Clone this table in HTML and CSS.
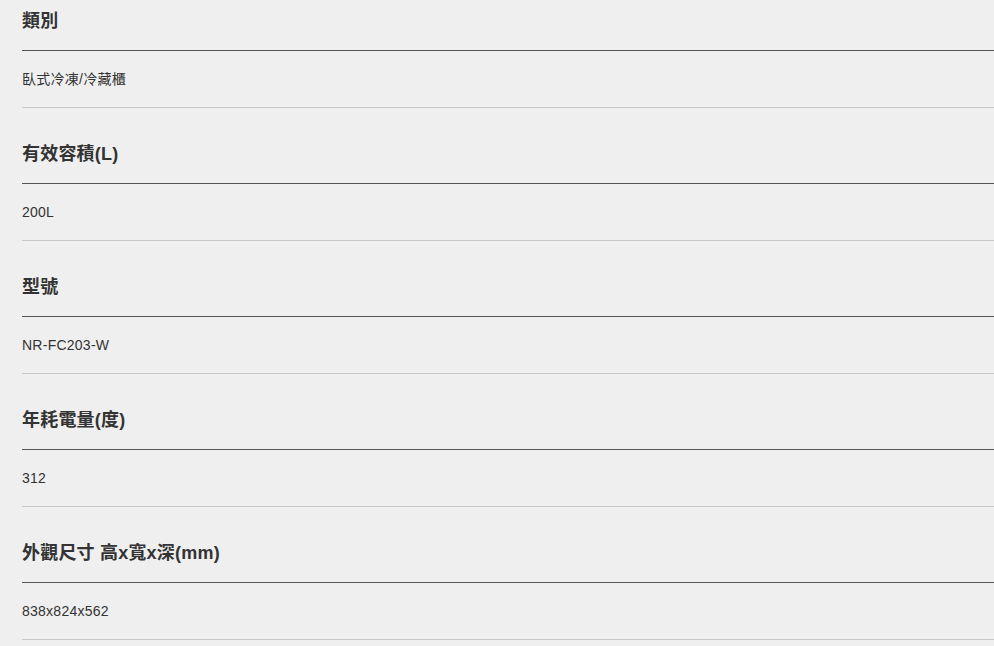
FILE: index.html
```html
<!DOCTYPE html>
<html lang="zh-Hant">
<head>
<meta charset="utf-8">
<title>規格</title>
<link rel="stylesheet" href="styles.css">
</head>
<body>
<div class="specs">
  <div class="item">
    <div class="label">類別</div>
    <div class="value">臥式冷凍/冷藏櫃</div>
  </div>
  <div class="item">
    <div class="label">有效容積(L)</div>
    <div class="value">200L</div>
  </div>
  <div class="item">
    <div class="label">型號</div>
    <div class="value">NR-FC203-W</div>
  </div>
  <div class="item">
    <div class="label">年耗電量(度)</div>
    <div class="value">312</div>
  </div>
  <div class="item">
    <div class="label">外觀尺寸 高x寬x深(mm)</div>
    <div class="value">838x824x562</div>
  </div>
</div>
</body>
</html>
```
FILE: styles.css
```css
html, body {
  margin: 0;
  padding: 0;
  background: #efefef;
}
body {
  font-family: "Liberation Sans", "Noto Sans CJK TC", sans-serif;
  color: #333;
}
.specs {
  margin-left: 22px;
}
.label {
  font-size: 18px;
  font-weight: bold;
  line-height: 30px;
  padding-top: 31px;
  padding-bottom: 14px;
  border-bottom: 1px solid #555;
  letter-spacing: 0.2px;
  color: #333;
}
.item:first-child .label {
  padding-top: 6px;
}
.value {
  font-size: 14px;
  line-height: 20px;
  padding-top: 18px;
  padding-bottom: 18px;
  border-bottom: 1px solid #c8c8c8;
  letter-spacing: 0.25px;
  color: #333;
}
```
